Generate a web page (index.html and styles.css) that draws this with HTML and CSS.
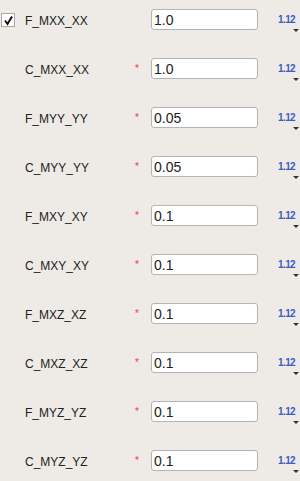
FILE: index.html
```html
<!DOCTYPE html>
<html lang="en">
<head>
    <meta charset="UTF-8">
    <link rel="stylesheet" href="styles.css">
</head>
<body>
    <div class="form">
        <div class="row">
            <span class="check"><svg width="11" height="11" viewBox="0 0 11 11"><path d="M2 5.5 L4.5 9 L9 1.5" fill="none" stroke="#111" stroke-width="2"/></svg></span>
            <span class="label">F_MXX_XX</span>
            <span class="req"></span>
            <input class="field" type="text" value="1.0">
            <span class="ver">1.12<i class="arrow"></i></span>
        </div>
        <div class="row">
            <span class="nocheck"></span>
            <span class="label">C_MXX_XX</span>
            <span class="req">*</span>
            <input class="field" type="text" value="1.0">
            <span class="ver">1.12<i class="arrow"></i></span>
        </div>
        <div class="row">
            <span class="nocheck"></span>
            <span class="label">F_MYY_YY</span>
            <span class="req">*</span>
            <input class="field" type="text" value="0.05">
            <span class="ver">1.12<i class="arrow"></i></span>
        </div>
        <div class="row">
            <span class="nocheck"></span>
            <span class="label">C_MYY_YY</span>
            <span class="req">*</span>
            <input class="field" type="text" value="0.05">
            <span class="ver">1.12<i class="arrow"></i></span>
        </div>
        <div class="row">
            <span class="nocheck"></span>
            <span class="label">F_MXY_XY</span>
            <span class="req">*</span>
            <input class="field" type="text" value="0.1">
            <span class="ver">1.12<i class="arrow"></i></span>
        </div>
        <div class="row">
            <span class="nocheck"></span>
            <span class="label">C_MXY_XY</span>
            <span class="req">*</span>
            <input class="field" type="text" value="0.1">
            <span class="ver">1.12<i class="arrow"></i></span>
        </div>
        <div class="row">
            <span class="nocheck"></span>
            <span class="label">F_MXZ_XZ</span>
            <span class="req">*</span>
            <input class="field" type="text" value="0.1">
            <span class="ver">1.12<i class="arrow"></i></span>
        </div>
        <div class="row">
            <span class="nocheck"></span>
            <span class="label">C_MXZ_XZ</span>
            <span class="req">*</span>
            <input class="field" type="text" value="0.1">
            <span class="ver">1.12<i class="arrow"></i></span>
        </div>
        <div class="row">
            <span class="nocheck"></span>
            <span class="label">F_MYZ_YZ</span>
            <span class="req">*</span>
            <input class="field" type="text" value="0.1">
            <span class="ver">1.12<i class="arrow"></i></span>
        </div>
        <div class="row">
            <span class="nocheck"></span>
            <span class="label">C_MYZ_YZ</span>
            <span class="req">*</span>
            <input class="field" type="text" value="0.1">
            <span class="ver">1.12<i class="arrow"></i></span>
        </div>
    </div>
</body>
</html>
```

FILE: styles.css
```css
/* Formulario de parametros */
body {
    margin: 0;
    background: #eeebe6;
    font-family: "Liberation Sans", Arial, sans-serif;
    color: #222;
}

.form {
    display: flex;
    flex-direction: column;
}

.row {
    display: flex;
    align-items: flex-start;
    height: 49px;
    box-sizing: border-box;
    padding-top: 9px;
}

/* caixa de selecao */
.check {
    flex: none;
    width: 12px;
    height: 12px;
    margin: 4px 10px 0 1px;
    border: 1px solid #a9a9a9;
    background: #fff;
    display: flex;
    align-items: center;
    justify-content: center;
}

.nocheck {
    flex: none;
    width: 25px;
}

.label {
    flex: none;
    width: 107px;
    font-size: 12px;
    line-height: 14px;
    padding-top: 5px;
}

.req {
    flex: none;
    width: 19px;
    color: #f03a3a;
    font-size: 10px;
    line-height: 10px;
    padding-top: 6px;
    padding-left: 3px;
    box-sizing: border-box;
}

.field {
    flex: none;
    width: 107px;
    min-width: 0;
    height: 21px;
    box-sizing: border-box;
    margin: 0;
    padding: 1px 2px 0;
    border: 1px solid #b4b4b4;
    border-radius: 3px;
    background: #fff;
    font-family: "Liberation Sans", Arial, sans-serif;
    font-size: 14px;
    color: #222;
    outline: none;
}

.ver {
    flex: none;
    position: relative;
    margin-left: 20px;
    padding-top: 6px;
    font-size: 10px;
    font-weight: bold;
    letter-spacing: -0.6px;
    color: #3b5bc9;
    line-height: 9px;
}

/* pequena seta para baixo */
.arrow {
    position: absolute;
    left: 15px;
    top: 20px;
    width: 0;
    height: 0;
    border-left: 3px solid transparent;
    border-right: 3px solid transparent;
    border-top: 3px solid #333;
}
```
